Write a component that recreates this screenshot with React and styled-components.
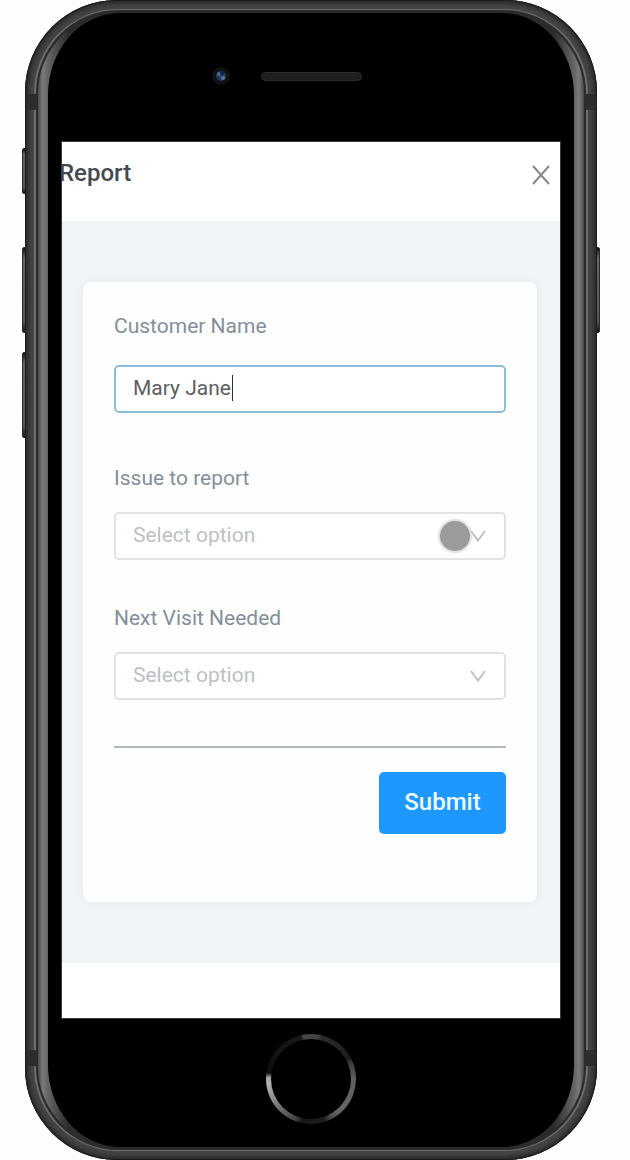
import React, { useState } from 'react';
import styled, { createGlobalStyle } from 'styled-components';

const issues = ['Leak', 'No power', 'Damaged part'];
const visits = ['Yes', 'No'];

const SelectField = ({ id, label, options, children }) => {
    const [value, setValue] = useState('');
    return (
        <Field>
            <Label htmlFor={id}>{label}</Label>
            <Control>
                <Select id={id} value={value} $empty={!value} onChange={(e) => setValue(e.target.value)}>
                    <option value="">Select option</option>
                    {options.map((option) => (
                        <option key={option} value={option}>{option}</option>
                    ))}
                </Select>
                <Chevron viewBox="0 0 16 12" aria-hidden="true">
                    <path d="M1 1 L8 10.5 L15 1" />
                </Chevron>
                {children}
            </Control>
        </Field>
    );
};

const ReportForm = () => {
    const [name, setName] = useState('Mary Jane');
    return (
        <Card onSubmit={(e) => e.preventDefault()}>
            <Field>
                <Label htmlFor="customer" $tall>Customer Name</Label>
                <Control>
                    <Input id="customer" value={name} onChange={(e) => setName(e.target.value)} />
                    <Caret />
                </Control>
            </Field>
            <SelectField id="issue" label="Issue to report" options={issues}>
                <TouchPoint />
            </SelectField>
            <SelectField id="visit" label="Next Visit Needed" options={visits} />
            <Divider />
            <Submit type="submit">Submit</Submit>
        </Card>
    );
};

const App = () => (
    <Stage>
        <GlobalStyle />
        <Phone>
            <SideKey $top={148} $height={46} />
            <SideKey $top={247} $height={86} />
            <SideKey $top={352} $height={86} />
            <SideKey $top={247} $height={86} $right />
            <Shell>
                <Rim>
                    <Bevel>
                        <Face>
                            <TopBezel>
                                <Camera viewBox="0 0 18 18" aria-hidden="true">
                                    <circle cx="9" cy="9" r="9" fill="#101112" />
                                    <circle cx="9" cy="9" r="5" fill="#1d3a5e" />
                                    <circle cx="7" cy="7" r="2" fill="#4f6a86" />
                                    <circle cx="11" cy="11" r="2" fill="#587796" />
                                    <circle cx="10" cy="6" r="2" fill="#0c2350" />
                                </Camera>
                                <Speaker />
                            </TopBezel>
                            <Screen>
                                <Header>
                                    <Title>Report</Title>
                                    <Close type="button" aria-label="Close">
                                        <svg width="18" height="20" viewBox="0 0 18 20">
                                            <path d="M1 1 L17 19 M17 1 L1 19" stroke="#85878a" strokeWidth="2" />
                                        </svg>
                                    </Close>
                                </Header>
                                <Body>
                                    <ReportForm />
                                </Body>
                            </Screen>
                            <BottomBezel>
                                <Home type="button" aria-label="Home">
                                    <HomeCenter />
                                </Home>
                            </BottomBezel>
                        </Face>
                    </Bevel>
                </Rim>
            </Shell>
            <Antenna $side="left" $edge="top" />
            <Antenna $side="right" $edge="top" />
            <Antenna $side="left" $edge="bottom" />
            <Antenna $side="right" $edge="bottom" />
        </Phone>
    </Stage>
);

const GlobalStyle = createGlobalStyle`
    *{
        box-sizing:border-box;
    }
    body{
        margin:0;
        background:#fdfdfd;
        font-family:Roboto, sans-serif;
    }
    button, input, select{
        font-family:inherit;
    }
`;

const Stage = styled.main`
    padding:0 33px 0 25px;
`;
const Phone = styled.div`
    position:relative;
`;
const SideKey = styled.span`
    position:absolute;
    top:${props => props.$top}px;
    ${props => props.$right ? 'right:-3px;' : 'left:-3px;'}
    width:6px;
    height:${props => props.$height}px;
    border-radius:2px;
    background:linear-gradient(#111, #666 12%, #555 88%, #111);
    border:1px solid #2c2c2c;
`;
const Antenna = styled.span`
    position:absolute;
    ${props => props.$side}:1px;
    ${props => props.$edge}:94px;
    width:11px;
    height:16px;
    background:#2c2c2d;
`;

/* phone frame, from the outside in */
const Shell = styled.div`
    position:relative;
    padding:9px;
    border-radius:92px;
    background:#454546;
    box-shadow:inset 0 0 0 1px #1c1c1d, inset 0 0 6px 2px #1a1a1b;
`;
const Rim = styled.div`
    padding:3px 2px;
    border:solid #6e6e6f;
    border-width:1px 2px;
    border-radius:84px;
    background:#2b2b2c;
`;
const Bevel = styled.div`
    padding:0 10px;
    border-radius:80px;
    background:linear-gradient(90deg, #4a4a4a, #7b7b7b 5px, #686868 9px, #2b2b2b 30px, #2b2b2b calc(100% - 30px), #686868 calc(100% - 9px), #7b7b7b calc(100% - 5px), #4a4a4a);
`;
const Face = styled.div`
    padding:0 14px;
    border-radius:72px / 82px;
    background:#000;
`;

const TopBezel = styled.div`
    height:129px;
    padding-bottom:3px;
    display:grid;
    grid-template-columns:1fr 101px 1fr;
    column-gap:31px;
    align-items:center;
`;
const Camera = styled.svg`
    width:18px;
    height:18px;
    justify-self:end;
`;
const Speaker = styled.span`
    height:9px;
    border-radius:5px;
    border:1px solid #2b2b2b;
    background:#1d1d1d;
`;
const BottomBezel = styled.div`
    height:129px;
    padding-bottom:8px;
    display:flex;
    justify-content:center;
    align-items:center;
`;
const Home = styled.button`
    width:90px;
    height:90px;
    padding:5px;
    border:none;
    border-radius:50%;
    background:conic-gradient(#444 0deg, #444 10deg, #2a2a2b 14deg, #1d1d1e 62deg, #3c3c3d 68deg, #5e5e60 90deg, #666668 140deg, #4a4a4c 152deg, #1e1e1f 162deg, #171717 192deg, #444 202deg, #77777a 232deg, #b4b4b6 264deg, #a0a0a2 272deg, #0e0e0e 278deg, #181818 346deg, #444 350deg, #444 360deg);
`;
const HomeCenter = styled.span`
    display:block;
    height:100%;
    border-radius:50%;
    background:#000;
`;

const Screen = styled.div`
    padding-bottom:55px;
    background:#fff;
    overflow:hidden;
    box-shadow:0 0 0 1px #3c3c3e;
`;
const Header = styled.header`
    height:79px;
    padding:15px 10px 0 0;
    display:flex;
    justify-content:space-between;
    align-items:flex-start;
`;
const Title = styled.h1`
    margin:0 0 0 -3px;
    font-size:24px;
    line-height:32px;
    font-weight:500;
    color:#46494d;
`;
const Close = styled.button`
    padding:8px 0;
    border:none;
    background:none;
    display:flex;
    cursor:pointer;
`;
const Body = styled.div`
    padding:61px 23px 61px 21px;
    background:#f1f4f7;
`;

const Card = styled.form`
    padding:30px 31px 68px;
    display:flex;
    flex-direction:column;
    border-radius:8px;
    background:#fefefe;
    box-shadow:0 0 6px rgba(60, 70, 80, .07);
`;
const Field = styled.div`
    margin-bottom:44px;
    &:first-child{
        margin-bottom:51px;
    }
`;
const Label = styled.label`
    display:block;
    margin-bottom:${props => props.$tall ? '25px' : '20px'};
    font-size:21px;
    line-height:28px;
    color:#858f99;
`;
const Control = styled.div`
    position:relative;
`;
const Input = styled.input`
    display:block;
    width:100%;
    height:48px;
    padding:0 17px 2px;
    border:2px solid #8bbdd9;
    border-radius:5px;
    background:#fff;
    font-size:21px;
    color:#5c5e61;
    outline:none;
`;
const Caret = styled.span`
    position:absolute;
    left:118px;
    top:10px;
    width:1px;
    height:26px;
    background:#333;
`;
const Select = styled.select`
    display:block;
    width:100%;
    height:48px;
    padding:0 40px 2px 17px;
    border:2px solid #e0e2e5;
    border-radius:5px;
    background:#fff;
    font-size:21px;
    color:${props => props.$empty ? '#bdc1c5' : '#5c5e61'};
    appearance:none;
    outline:none;
`;
const Chevron = styled.svg`
    position:absolute;
    right:20px;
    top:18px;
    width:16px;
    height:12px;
    fill:none;
    stroke:#bfc3c7;
    stroke-width:2;
    pointer-events:none;
`;
const TouchPoint = styled.span`
    position:absolute;
    right:36px;
    top:9px;
    width:30px;
    height:30px;
    border-radius:50%;
    background:#999b9c;
    box-shadow:0 0 2px 2px #dcdfe2;
    pointer-events:none;
`;
const Divider = styled.hr`
    width:100%;
    height:2px;
    margin:2px 0 24px;
    border:none;
    background:#b3b8bb;
`;
const Submit = styled.button`
    align-self:flex-end;
    width:127px;
    height:62px;
    padding:0 0 2px;
    border:none;
    border-radius:5px;
    background:#1c98fe;
    color:#eef8ff;
    font-size:24px;
    font-weight:500;
    cursor:pointer;
`;

export default App;
